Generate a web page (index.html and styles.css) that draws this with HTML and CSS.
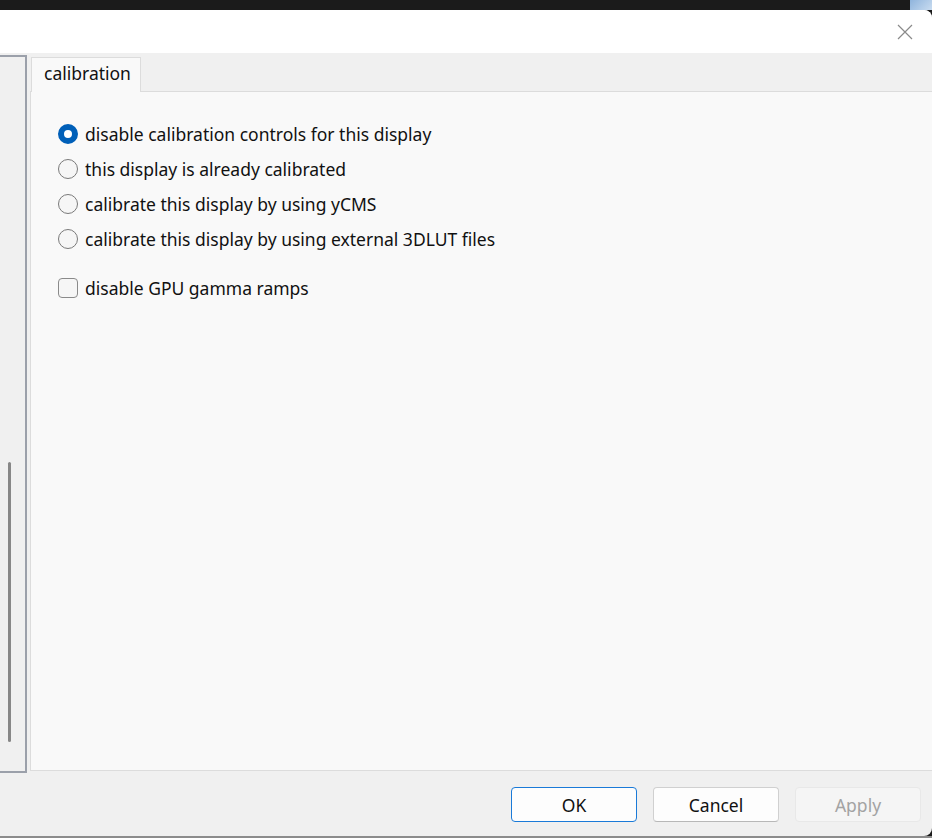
FILE: index.html
```html
<!DOCTYPE html>
<html>
<head>
<meta charset="utf-8">
<link rel="stylesheet" href="styles.css">
</head>
<body>
<div class="topbar"><div class="desk-blue"></div></div>
<div class="window">
  <div class="titlebar">
    <svg class="close" width="16" height="16" viewBox="0 0 16 16"><path d="M1 1 L15 15 M15 1 L1 15" stroke="#8a8a8a" stroke-width="1.2" fill="none"/></svg>
  </div>
  <div class="main">
    <div class="leftpanel"><div class="thumb"></div></div>
    <div class="tabs">
      <div class="tabstrip"><div class="tab">calibration</div></div>
      <div class="page">
        <label class="row"><span class="radio checked"></span><span>disable calibration controls for this display</span></label>
        <label class="row"><span class="radio"></span><span>this display is already calibrated</span></label>
        <label class="row"><span class="radio"></span><span>calibrate this display by using yCMS</span></label>
        <label class="row"><span class="radio"></span><span>calibrate this display by using external 3DLUT files</span></label>
        <label class="row check-row"><span class="checkbox"></span><span>disable GPU gamma ramps</span></label>
      </div>
    </div>
  </div>
  <div class="footer">
    <button class="btn default">OK</button>
    <button class="btn">Cancel</button>
    <button class="btn disabled">Apply</button>
  </div>
</div>
<div class="bottombar"></div>
</body>
</html>
```
FILE: styles.css
```css
html, body { margin: 0; padding: 0; }
body {
  background: #1b1b1b;
  font-family: "Noto Sans", "Open Sans", sans-serif;
  font-size: 17.5px;
  color: #111;
  width: 932px;
  height: 838px;
  overflow: hidden;
}
.topbar {
  height: 10px;
  display: flex;
  justify-content: flex-end;
}
.desk-blue {
  width: 22px;
  height: 10px;
  background: linear-gradient(135deg, #8fb4dc, #c9dcf0);
}
.window {
  height: 826px;
  background: #f0f0f0;
  border-radius: 0 8px 8px 0;
  display: flex;
  flex-direction: column;
  overflow: hidden;
}
.titlebar {
  height: 43px;
  background: #ffffff;
  display: flex;
  justify-content: flex-end;
  align-items: center;
  padding-right: 19px;
}
.close { display: block; margin-top: 1px; }
.main {
  height: 718px;
  display: flex;
  padding-top: 2px;
  box-sizing: border-box;
}
.leftpanel {
  width: 25px;
  border: 2px solid #9ba0aa;
  border-left: none;
  background: #f0f0f0;
  display: flex;
  flex-direction: column;
  justify-content: flex-end;
  padding-bottom: 29px;
  box-sizing: content-box;
  height: 685px;
}
.thumb {
  width: 3px;
  height: 280px;
  margin-left: 8px;
  background: #878787;
  border-radius: 2px;
}
.tabs {
  flex: 1;
  display: flex;
  flex-direction: column;
  margin-left: 3px;
}
.tabstrip {
  height: 36px;
  display: flex;
  align-items: flex-end;
  padding-left: 1px;
}
.tab {
  width: 110px;
  height: 35px;
  box-sizing: border-box;
  background: #f9f9f9;
  border: 1px solid #dcdcdc;
  border-bottom: none;
  padding: 3px 0 0 12px;
  margin-bottom: -1px;
  position: relative;
  z-index: 1;
}
.page {
  flex: 1;
  background: #f9f9f9;
  border: 1px solid #dcdcdc;
  border-right: none;
  padding: 24px 0 0 27px;
  display: flex;
  flex-direction: column;
}
.row {
  display: flex;
  align-items: center;
  height: 35px;
  gap: 7px;
}
.radio {
  width: 20px;
  height: 20px;
  box-sizing: border-box;
  border: 1px solid #7a7a7a;
  border-radius: 50%;
  background: #f6f6f6;
  flex: none;
}
.radio.checked {
  border: 6px solid #005fb8;
  background: #ffffff;
}
.check-row { margin-top: 14px; }
.checkbox {
  width: 20px;
  height: 20px;
  box-sizing: border-box;
  border: 1px solid #8a8a8a;
  border-radius: 4px;
  background: #f6f6f6;
  flex: none;
}
.footer {
  flex: 1;
  display: flex;
  justify-content: flex-end;
  align-items: flex-start;
  padding: 16px 11px 0 0;
  gap: 16px;
}
.btn {
  width: 126px;
  height: 35px;
  font-family: "Noto Sans", "Open Sans", sans-serif;
  font-size: 17.5px;
  color: #111;
  background: #fdfdfd;
  border: 1px solid #d0d0d0;
  border-bottom-color: #b8b8b8;
  border-radius: 4px;
  padding: 0;
}
.btn.default {
  border: 1.5px solid #1a7ad8;
}
.btn.disabled {
  background: #f5f5f5;
  border-color: #e8e8e8;
  color: #a3a3a3;
}
.bottombar {
  height: 2px;
  background: #8c8c8c;
}
```
